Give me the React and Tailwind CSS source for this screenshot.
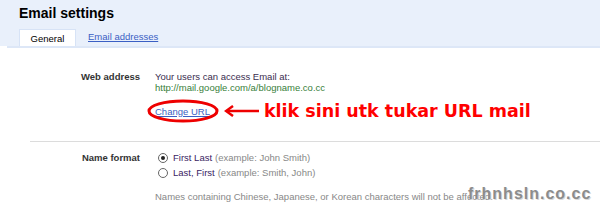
export default function App() {
  return (
    <div className="w-[600px] h-[209px] bg-white overflow-hidden relative text-[9.5px] text-[#222]" style={{ fontFamily: '"Liberation Sans", Arial, sans-serif' }}>
      <div className="bg-[#e9f0fb] h-[46px] pl-[19px] flex flex-col">
        <div className="pt-[4px] text-[14px] font-bold text-black leading-[18px]">Email settings</div>
        <div className="flex items-end mt-[9px] h-[15px]">
          <div className="bg-white w-[57px] h-[17px] border-t border-l border-r border-[#d7e3f6] flex items-center justify-center text-[9.5px] text-black pt-[3px]">General</div>
          <a className="ml-[12px] text-[#3b5fc4] underline text-[9.5px] pb-[2px]">Email addresses</a>
        </div>
      </div>
      <div className="ml-[7px] h-[2px] bg-[#dde7f7]"></div>

      <div className="flex mt-[23px]">
        <div className="w-[140px] text-right font-bold text-[#333] leading-[11px]">Web address</div>
        <div className="ml-[15px] flex flex-col leading-[11px]">
          <div className="text-[#3a2d4f]">Your users can access Email at:</div>
          <div className="text-[#38803a]">http://mail.google.com/a/blogname.co.cc</div>
          <div className="flex items-center mt-[8px] h-[20px]">
            <div className="relative">
              <a className="text-[#3b5fc4] underline">Change URL</a>
              <svg className="absolute left-[-8px] top-[-6.5px]" width="72" height="24" viewBox="0 0 72 24">
                <ellipse cx="36" cy="12" rx="34" ry="10" fill="none" stroke="#e00" strokeWidth="3" />
              </svg>
            </div>
            <svg className="ml-[14px]" width="35" height="12" viewBox="0 0 35 12">
              <path d="M35 6 H4" stroke="#e00" strokeWidth="2.5" />
              <path d="M9 1 L2 6 L9 11" fill="none" stroke="#e00" strokeWidth="2.5" />
            </svg>
            <span className="ml-[5px] text-[17.5px] font-bold text-[#f00] leading-[20px]" style={{ fontFamily: '"DejaVu Sans", Verdana, sans-serif' }}>klik sini utk tukar URL mail</span>
          </div>
        </div>
      </div>

      <div className="ml-[30px] mt-[20px] h-px bg-[#dcdcdc]"></div>

      <div className="flex mt-[8px]">
        <div className="w-[140px] text-right font-bold text-[#333] leading-[11px] mt-[2px]">Name format</div>
        <div className="ml-[15px] flex flex-col leading-[11px]">
          <div className="flex items-center h-[15px]">
            <span className="w-[10px] h-[10px] rounded-full border border-[#666] bg-white flex items-center justify-center ml-[3px]">
              <span className="w-[4px] h-[4px] rounded-full bg-[#222]"></span>
            </span>
            <span className="ml-[5px] text-[#3a1d63]">First Last</span>
            <span className="ml-[3px] text-[#888]">(example: John Smith)</span>
          </div>
          <div className="flex items-center h-[15px]">
            <span className="w-[10px] h-[10px] rounded-full border border-[#666] bg-white ml-[3px]"></span>
            <span className="ml-[5px] text-[#3a1d63]">Last, First</span>
            <span className="ml-[3px] text-[#888]">(example: Smith, John)</span>
          </div>
          <div className="mt-[11px] text-[#888]">Names containing Chinese, Japanese, or Korean characters will not be affected.</div>
        </div>
      </div>

      <div className="absolute left-[468px] top-[185px] text-[16px] leading-[18px] font-bold text-[#8c8c8c] tracking-[1px]" style={{ fontFamily: '"Liberation Sans", Arial, sans-serif', textShadow: '1px 1px 0 #d8d8d8' }}>frhnhsln.co.cc</div>
    </div>
  );
}
